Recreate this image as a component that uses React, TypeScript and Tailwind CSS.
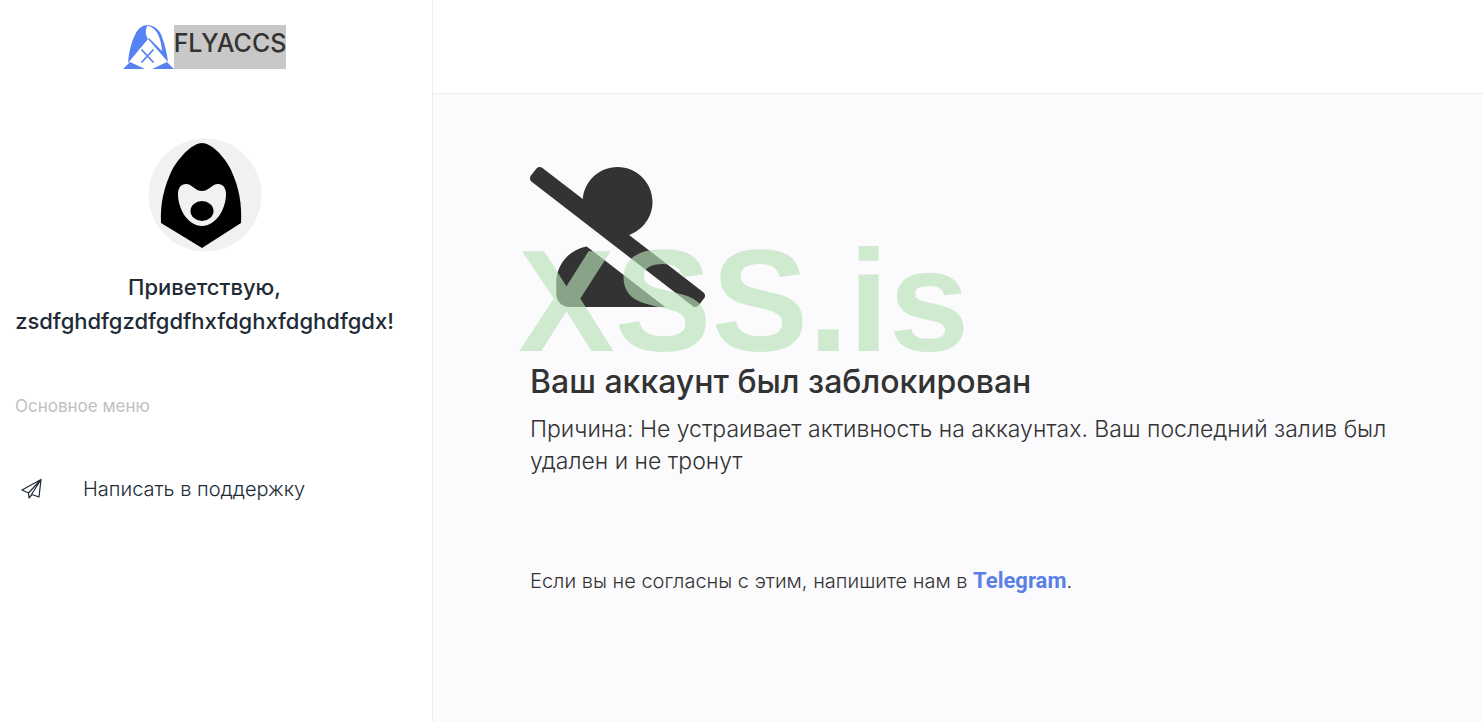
function Logo() {
  return (
    <svg viewBox="0 0 51 45" className="h-[45px] w-[51px] shrink-0" fill="#5783f2" aria-hidden="true">
      <path d="M5 38C6 27 8 18 12 10 15 3 20 0 25 0c-3 4-3 9 0 14L5 38z" />
      <path d="M25 0c7 1 12 5 14 12 3 8 5 16 6 25L25 14l1-1 13 13C38 13 34 3 25 1z" />
      <path d="M18.500 24.500l12 13M30.500 24.500l-12 13" stroke="#5783f2" strokeWidth="1.800" />
      <path d="M0 44l7-7 15 7zM51 44l-7-7-15 7z" />
    </svg>
  );
}

function Avatar() {
  return (
    <svg viewBox="0 0 114 114" className="size-[114px]" role="img" aria-label="Аватар">
      <circle cx="57" cy="57" r="56.5" fill="#f1f1f1" />
      <path
        d="M54 5C62 5 75 16 83 32c8 17 11 34 10 53L54 110 13 85c-1-19 3-36 11-53C33 16 46 5 54 5z"
        fill="#000"
      />
      <path
        d="M30 56c0-6 3-10 8-10 6 0 9 7 16 7s10-7 16-7c5 0 8 4 8 10 0 15-10 32-24 32S30 71 30 56z"
        fill="#f1f1f1"
      />
      <ellipse cx="54" cy="73" rx="11.5" ry="10" fill="#000" />
    </svg>
  );
}

function UserSlash() {
  return (
    <svg viewBox="0 0 640 512" className="h-[140px] w-[175px]" fill="#333" aria-hidden="true">
      <path d="M633.8 458.1L362.3 248.3C412.1 230.7 448 183.8 448 128 448 57.3 390.7 0 320 0c-67.1 0-121.5 51.8-126.9 117.4L45.5 3.4C38.5-2 28.5-.8 23 6.2L3.4 31.4c-5.4 7-4.2 17 2.8 22.4l588.4 454.7c7 5.4 17 4.2 22.5-2.8l19.6-25.3c5.4-6.8 4.1-16.9-2.9-22.3zM96 422.4V464c0 26.5 21.5 48 48 48h350.2L207.4 290.3C144.2 301.3 96 356 96 422.4z" />
    </svg>
  );
}

function PaperPlane() {
  return (
    <svg
      viewBox="0 0 22 22"
      className="size-[22px] shrink-0"
      fill="none"
      stroke="currentColor"
      strokeWidth="1.2"
      strokeLinejoin="round"
      aria-hidden="true"
    >
      <path d="M20 1.500L1 12l6.500 3 .5 5 3-3.500 7 2.500zM7.500 15L20 1.500 10.500 16.500" />
    </svg>
  );
}

function Sidebar() {
  return (
    <aside className="w-[433px] shrink-0 border-r border-[#ececf1] bg-white pl-[15px] pr-[38px]">
      <a href="#" className="mt-[25px] flex h-11 justify-center text-[#333]">
        <Logo />
        <span className="bg-[#c8c8c8] text-[25px] leading-9 font-medium">FLYACCS</span>
      </a>
      <div className="mt-[69px] flex flex-col items-center">
        <Avatar />
        <h2 className="mt-[18px] text-center text-[22px] leading-[34px] font-medium text-[#212b36]">
          Приветствую,
          <br />
          zsdfghdfgzdfgdfhxfdghxfdghdfgdx!
        </h2>
      </div>
      <nav className="mt-[54px]">
        <p className="text-[17px] leading-7 text-[#c0c0c0]">Основное меню</p>
        <a
          href="#"
          className="mt-[55px] flex items-center gap-10 pl-[6px] text-xl leading-7 font-light text-[#212b36]"
        >
          <PaperPlane />
          Написать в поддержку
        </a>
      </nav>
    </aside>
  );
}

export default function App() {
  return (
    <div className="flex min-h-screen bg-[#fbfbfd] font-['Inter',sans-serif] text-[#333]">
      <Sidebar />
      <div className="min-w-0 flex-1">
        <header className="h-[94px] border-b border-[#ececf1] bg-white" />
        <main className="pt-[73px] pr-20 pl-[97px]">
          <div className="relative">
            <UserSlash />
            <span className="pointer-events-none absolute -left-3 top-[80px] font-['Liberation_Sans',sans-serif] text-[145px] leading-[108px] font-bold text-[#b8e0b8]/65">
              XSS.is
            </span>
          </div>
          <h1 className="mt-[55px] text-[32px] leading-10 font-medium">Ваш аккаунт был заблокирован</h1>
          <p className="mt-[11px] text-[23px] leading-8 font-light">
            Причина: Не устраивает активность на аккаунтах. Ваш последний залив был удален и не тронут
          </p>
          <p className="mt-[88px] text-xl leading-8 font-light">
            Если вы не согласны с этим, напишите нам в{' '}
            <a href="#" className="font-['Roboto',sans-serif] text-[22px] font-bold text-[#5a7fe8]">
              Telegram
            </a>
            .
          </p>
        </main>
      </div>
    </div>
  );
}
